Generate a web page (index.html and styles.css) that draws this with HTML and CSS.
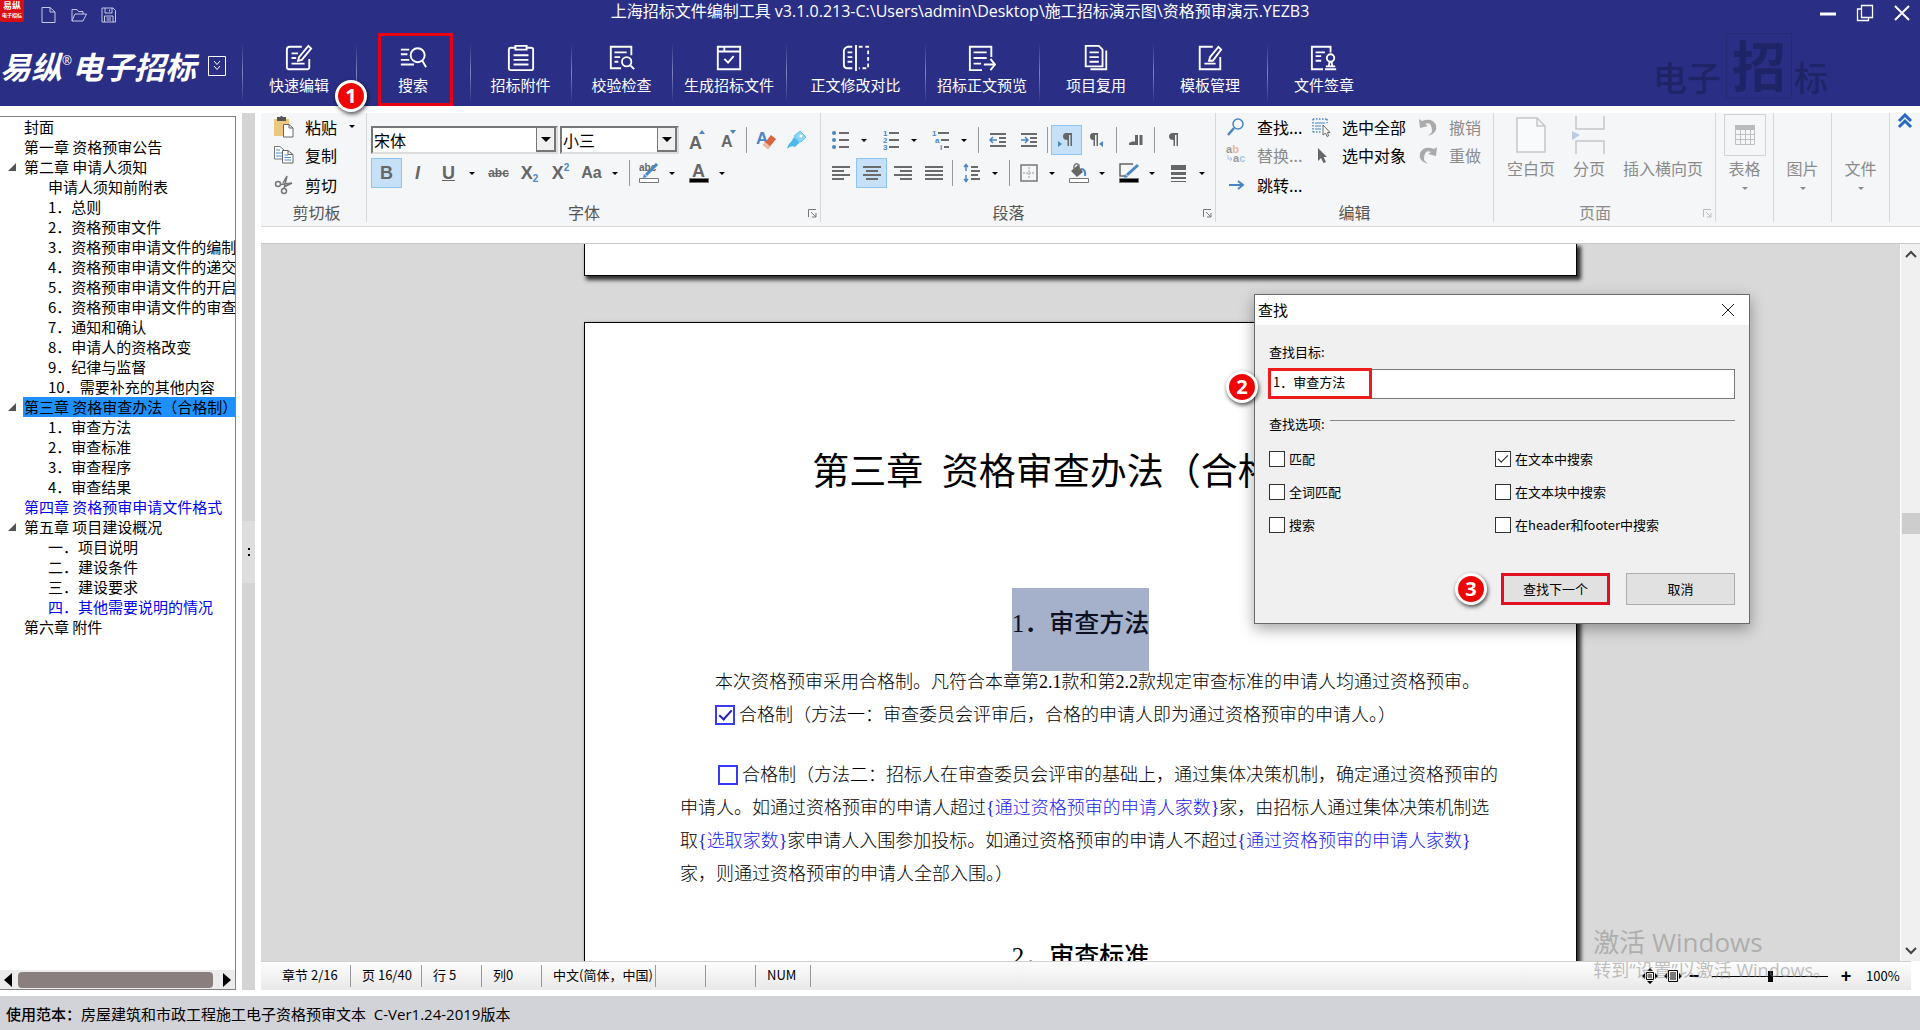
FILE: index.html
```html
<!DOCTYPE html>
<html lang="zh-CN">
<head>
  <meta charset="UTF-8" />
  <meta name="viewport" content="width=device-width, initial-scale=1.0"/>
  <title>上海招标文件编制工具</title>
  <link rel="stylesheet" href="styles.css">
</head>
<body>
  <header class="app-header">
    <div class="title-bar">
      <div class="app-icon"><span>易纵</span><small>电子招标</small></div>
      <button class="quick" aria-label="新建"><svg width="18" height="18" viewBox="0 0 18 18"><path d="M2 1.500H10L15 6V16.500H2ZM10 1.500V6H15"/></svg></button>
      <button class="quick" aria-label="打开"><svg width="18" height="18" viewBox="0 0 18 18"><path d="M2 15V3.500H7L8.500 5.500H13V8M2 15L5 8H16.500L13 15Z"/></svg></button>
      <button class="quick" aria-label="保存"><svg width="18" height="18" viewBox="0 0 18 18"><path d="M2 2H13L15.500 4.500V16H2ZM5 2V7H12V2M9.500 3.500V5.500M4.500 16V10H13V16M6.500 12H11M6.500 14H11"/></svg></button>
      <div class="window-title">上海招标文件编制工具 v3.1.0.213-C:\Users\admin\Desktop\施工招标演示图\资格预审演示.YEZB3</div>
      <div class="window-controls">
        <button aria-label="最小化"><svg width="20" height="20" viewBox="0 0 20 20"><path d="M2 11H18" stroke-width="3"/></svg></button>
        <button aria-label="还原"><svg width="20" height="20" viewBox="0 0 20 20"><path d="M6.500 2.500H17.500V14.500H6.500ZM6.500 6H2.500V17.500H13.500V14.500" stroke-width="1.300"/></svg></button>
        <button aria-label="关闭"><svg width="20" height="20" viewBox="0 0 20 20"><path d="M3 3L17 17M17 3L3 17" stroke-width="2"/></svg></button>
      </div>
    </div>
    <nav class="main-tools">
      <div class="brand">
        <span class="brand-name">易纵<sup>®</sup>电子招标</span>
        <button class="brand-menu" aria-label="菜单"><svg width="18" height="20" viewBox="0 0 18 20"><path d="M.500 .500H17.500V19.500H.500ZM6 5L9 8.500L12 5M6 10L9 13.500L12 10"/></svg></button>
      </div>
      <button class="tool"><svg width="30" height="30" viewBox="0 0 30 30"><path d="M18 3H5Q2 3 2 6V25Q2 27 4 27H24Q26 27 26 25V16M25 2L28 5L18 17L14 18L15 14ZM7 10H14M7 15H12M7 21H21"/></svg>快速编辑</button>
      <button class="tool tool-marked"><svg width="30" height="30" viewBox="0 0 30 30"><circle cx="20" cy="12" r="7.500"/><path d="M25 18L29 25M2 6H11M2 11H9M2 17H11M2 22H16"/></svg>搜索<span class="badge badge-one">1</span></button>
      <button class="tool narrow"><svg width="30" height="30" viewBox="0 0 30 30"><path d="M9 4H4Q2 4 2 6V26Q2 28 4 28H26Q28 28 28 26V6Q28 4 26 4H21M9 2H21V6H9ZM7 12H23M7 17H23M7 22H23"/></svg>招标附件</button>
      <button class="tool narrow"><svg width="30" height="30" viewBox="0 0 30 30"><path d="M14 26H3V3H25V12M7 9H20M7 14H13M7 19H11"/><circle cx="20" cy="19" r="5"/><path d="M24 23L28 27"/></svg>校验检查</button>
      <button class="tool"><svg width="30" height="30" viewBox="0 0 30 30"><path d="M3 3H27V27H3ZM3 8H27M10 3V8M10 16L14 20L20 13"/></svg>生成招标文件</button>
      <button class="tool wide"><svg width="30" height="30" viewBox="0 0 30 30"><path d="M11 3H6Q2 4 2 8V22Q2 26 6 26H11M15 1V29M6 9H11M6 14H11M6 19H11"/><path d="M18 3H28V26H18" stroke-dasharray="4 3"/></svg>正文修改对比</button>
      <button class="tool"><svg width="30" height="30" viewBox="0 0 30 30"><path d="M15 28H2V3H25V14M6 9H20M6 15H20M6 21H14M17 22H29M24 16L29 22L24 28"/></svg>招标正文预览</button>
      <button class="tool"><svg width="30" height="30" viewBox="0 0 30 30"><path d="M4 2H18L22 6V24H4ZM8 9H18M8 14H18M8 19H18M26 7V27H9"/></svg>项目复用</button>
      <button class="tool"><svg width="30" height="30" viewBox="0 0 30 30"><path d="M18 3H4V27H26V14M24 3L27 6L18 18L14 18L15 14ZM9 21H21"/></svg>模板管理</button>
      <button class="tool last"><svg width="30" height="30" viewBox="0 0 30 30"><path d="M14 27H2V3H22V9M6 9H16M6 13H12M6 18H12M16 27H28M17 24H27M20 24L21 19M24 24L23 19"/><circle cx="22" cy="15" r="4"/></svg>文件签章</button>
      <div class="header-mark">电子<b>招</b>标</div>
    </nav>
  </header>

  <main class="main">
    <aside class="sidebar">
      <ul class="tree">
        <li><a href="#">封面</a></li>
        <li><a href="#">第一章 资格预审公告</a></li>
        <li class="open"><a href="#">第二章 申请人须知</a></li>
        <li class="sub"><a href="#">申请人须知前附表</a></li>
        <li class="sub"><a href="#">1．总则</a></li>
        <li class="sub"><a href="#">2．资格预审文件</a></li>
        <li class="sub"><a href="#">3．资格预审申请文件的编制</a></li>
        <li class="sub"><a href="#">4．资格预审申请文件的递交</a></li>
        <li class="sub"><a href="#">5．资格预审申请文件的开启</a></li>
        <li class="sub"><a href="#">6．资格预审申请文件的审查</a></li>
        <li class="sub"><a href="#">7．通知和确认</a></li>
        <li class="sub"><a href="#">8．申请人的资格改变</a></li>
        <li class="sub"><a href="#">9．纪律与监督</a></li>
        <li class="sub"><a href="#">10．需要补充的其他内容</a></li>
        <li class="open selected"><a href="#">第三章 资格审查办法（合格制）</a></li>
        <li class="sub"><a href="#">1．审查方法</a></li>
        <li class="sub"><a href="#">2．审查标准</a></li>
        <li class="sub"><a href="#">3．审查程序</a></li>
        <li class="sub"><a href="#">4．审查结果</a></li>
        <li class="blue"><a href="#">第四章 资格预审申请文件格式</a></li>
        <li class="open"><a href="#">第五章 项目建设概况</a></li>
        <li class="sub"><a href="#">一．项目说明</a></li>
        <li class="sub"><a href="#">二．建设条件</a></li>
        <li class="sub"><a href="#">三．建设要求</a></li>
        <li class="sub blue"><a href="#">四．其他需要说明的情况</a></li>
        <li><a href="#">第六章 附件</a></li>
      </ul>
      <div class="h-scroll">
        <button aria-label="向左"><svg width="8" height="14" viewBox="0 0 8 14"><path d="M8 0V14L0 7Z"/></svg></button>
        <div class="h-thumb"></div>
        <button aria-label="向右"><svg width="8" height="14" viewBox="0 0 8 14"><path d="M0 0V14L8 7Z"/></svg></button>
      </div>
    </aside>
    <div class="splitter"><div class="splitter-handle"><i></i><i></i></div></div>

    <section class="workspace">
      <div class="ribbon">
        <div class="group clipboard">
          <div class="stack">
            <button class="item"><svg width="20" height="22" viewBox="0 0 20 22"><path fill="#ecc77e" d="M0 3H15V20H0Z"/><path fill="#555" d="M3 1H6Q7.500-1 9 1H12V5H3Z"/><path fill="#fff" stroke="#666" d="M9.500 8.500H15L19 12V21H9.500ZM15 8.500V12H19"/></svg>粘贴<i class="caret paste-caret"></i></button>
            <button class="item"><svg width="20" height="22" viewBox="0 0 20 22"><path fill="#fff" stroke="#777" d="M.500 2.500H6L10 6V15H.500Z"/><path stroke="#4a86c5" d="M2 6H6M2 9H8M2 12H8"/><path fill="#fff" stroke="#666" d="M8.500 6.500H14L19 10.500V19H8.500ZM14 6.500V10.500H19"/><path stroke="#4a86c5" d="M10.500 11H14M10.500 13.500H17M10.500 16H17"/></svg>复制</button>
            <button class="item"><svg width="20" height="22" viewBox="0 0 20 22" fill="none" stroke="#777" stroke-width="1.500"><circle cx="4" cy="10" r="2.500"/><circle cx="10" cy="17" r="2.500"/><path d="M6.500 10.500L18 9L10 13M10 14.500L13 2L9 9"/></svg>剪切</button>
          </div>
          <div class="group-title">剪切板</div>
        </div>

        <div class="group font">
          <div class="rows">
            <div class="row">
              <label class="combo combo-font"><select aria-label="字体"><option>宋体</option></select><span class="drop"><i class="caret big"></i></span></label>
              <label class="combo combo-size"><select aria-label="字号"><option>小三</option></select><span class="drop"><i class="caret big"></i></span></label>
              <button class="ib" aria-label="增大字号"><svg width="22" height="22" viewBox="0 0 22 22"><text x="3" y="20" class="gA">A</text><path fill="#4a86c5" d="M13 5L16 1L19 5Z"/></svg></button>
              <button class="ib" aria-label="减小字号"><svg width="22" height="22" viewBox="0 0 22 22"><text x="4" y="18" class="gS">A</text><path fill="#4a86c5" d="M13 1L16 5L19 1Z"/></svg></button>
              <span class="sep"></span>
              <button class="ib" aria-label="清除格式"><svg width="22" height="22" viewBox="0 0 22 22"><text x="1" y="15" class="gB">A</text><path fill="#d9643f" d="M16 6L21 10L13 20L8 16Z"/><path fill="#f3b8a4" d="M8 16L10 13L15 17L13 20Z"/></svg></button>
              <button class="ib" aria-label="格式刷"><svg width="22" height="22" viewBox="0 0 22 22"><path fill="#8fd6f7" stroke="#5cc3ef" d="M14 2L20 8L15 13L8 7Z"/><path fill="#4bb9ee" d="M8 8L14 13L9 18Q5 16 1 20Q2 15 5 13Z"/><circle cx="15" cy="7" r="1.500" fill="#fff"/></svg></button>
            </div>
            <div class="row">
              <button class="ib on txt">B</button>
              <button class="ib txt"><em>I</em></button>
              <button class="ib txt"><u>U</u></button><button class="cb" aria-label="下划线样式"><i class="caret"></i></button>
              <button class="ib txt tiny"><s>abc</s></button>
              <button class="ib txt">X<sub>2</sub></button>
              <button class="ib txt">X<sup>2</sup></button>
              <button class="ib txt small">Aa</button><button class="cb" aria-label="大小写"><i class="caret"></i></button>
              <span class="sep"></span>
              <button class="ib" aria-label="突出显示"><svg width="22" height="22" viewBox="0 0 22 22"><text x="1" y="9" class="gT">abc</text><path stroke="#4a86c5" stroke-width="3" d="M19 2L8 13"/><path fill="#4a86c5" d="M5 16L6 12L9 15Z"/><path fill="#fff" stroke="#777" d="M1.500 16.500H20.500V20.500H1.500Z"/></svg></button><button class="cb" aria-label="突出显示颜色"><i class="caret"></i></button>
              <button class="ib" aria-label="字体颜色"><svg width="22" height="22" viewBox="0 0 22 22"><text x="4" y="15" class="gA">A</text><path fill="#000" stroke="#777" d="M1.500 16.500H20.500V20.500H1.500Z"/></svg></button><button class="cb" aria-label="字体颜色选择"><i class="caret"></i></button>
            </div>
          </div>
          <div class="group-title">字体</div>
          <svg class="launch" width="9" height="9" viewBox="0 0 9 9"><path d="M.500 8V.500H8M3 3L8 8M8 4V8H4"/></svg>
        </div>

        <div class="group para">
          <div class="rows">
            <div class="row">
              <button class="ib" aria-label="项目符号"><svg width="20" height="20" viewBox="0 0 20 20"><g fill="#4a86c5"><circle cx="3" cy="3" r="2"/><circle cx="3" cy="10" r="2"/><circle cx="3" cy="17" r="2"/></g><path class="ln" d="M8 3H18M8 10H18M8 17H18"/></svg></button><button class="cb" aria-label="项目符号库"><i class="caret"></i></button>
              <button class="ib" aria-label="编号"><svg width="20" height="20" viewBox="0 0 20 20"><text x="2" y="6" class="gN">1</text><text x="2" y="13" class="gN">2</text><text x="2" y="20" class="gN">3</text><path class="ln" d="M8 3H18M8 10H18M8 17H18"/></svg></button><button class="cb" aria-label="编号库"><i class="caret"></i></button>
              <button class="ib" aria-label="多级列表"><svg width="20" height="20" viewBox="0 0 20 20"><text x="1" y="6" class="gN">1</text><text x="4" y="13" class="gN">a</text><text x="9" y="20" class="gN">i</text><path class="ln" d="M7 3H18M10 10H18M13 17H18"/></svg></button><button class="cb" aria-label="列表库"><i class="caret"></i></button>
              <span class="sep"></span>
              <button class="ib" aria-label="减少缩进"><svg width="20" height="20" viewBox="0 0 20 20"><path class="ln" d="M2 4H18M11 8H18M11 12H18M2 16H18"/><path stroke="#4a86c5" fill="none" stroke-width="1.500" d="M9 10H3M5 7L2 10L5 13"/></svg></button>
              <button class="ib" aria-label="增加缩进"><svg width="20" height="20" viewBox="0 0 20 20"><path class="ln" d="M2 4H18M11 8H18M11 12H18M2 16H18"/><path stroke="#4a86c5" fill="none" stroke-width="1.500" d="M2 10H8M6 7L9 10L6 13"/></svg></button>
              <span class="sep"></span>
              <button class="ib on" aria-label="从左到右"><svg width="20" height="20" viewBox="0 0 20 20"><path class="fl" d="M9 3H15V16H13.500V5H12V16H10.500V10Q6 10 6 6.500Q6 3 9 3"/><path fill="#4a86c5" d="M1 11V17L5 14Z"/></svg></button>
              <button class="ib" aria-label="从右到左"><svg width="20" height="20" viewBox="0 0 20 20"><path class="fl" d="M5 3H10V16H8.500V5H7V16H5.500V10Q2 10 2 6.500Q2 3 5 3"/><path fill="#4a86c5" d="M15 11V17L11 14Z"/></svg></button>
              <span class="sep"></span>
              <button class="ib" aria-label="断行"><svg width="20" height="20" viewBox="0 0 20 20"><path class="fl" d="M9 5H12V15H3V13L6 11.500H9ZM13.500 5H16.500V15H13.500Z"/></svg></button>
              <span class="sep"></span>
              <button class="ib" aria-label="显示标记"><svg width="20" height="20" viewBox="0 0 20 20"><path class="fl" d="M9 3H14V16H12.500V5H11V16H9.500V10Q5 10 5 6.500Q5 3 9 3"/></svg></button>
            </div>
            <div class="row">
              <button class="ib" aria-label="左对齐"><svg width="20" height="20" viewBox="0 0 20 20"><path class="ln" d="M1 4H19M1 8H13M1 12H19M1 16H13"/></svg></button>
              <button class="ib on" aria-label="居中"><svg width="20" height="20" viewBox="0 0 20 20"><path class="ln" d="M1 4H19M4 8H16M1 12H19M4 16H16"/></svg></button>
              <button class="ib" aria-label="右对齐"><svg width="20" height="20" viewBox="0 0 20 20"><path class="ln" d="M1 4H19M7 8H19M1 12H19M7 16H19"/></svg></button>
              <button class="ib" aria-label="两端对齐"><svg width="20" height="20" viewBox="0 0 20 20"><path class="ln" d="M1 4H19M1 8H19M1 12H19M1 16H19"/></svg></button>
              <span class="sep"></span>
              <button class="ib" aria-label="行距"><svg width="20" height="20" viewBox="0 0 20 20"><path fill="none" stroke="#4a86c5" stroke-width="1.500" d="M4 2V8M2 4L4 1.500L6 4M4 12V18M2 16L4 18.500L6 16"/><path class="ln" d="M9 4H16M9 8H18M9 12H16M9 16H18"/></svg></button><button class="cb" aria-label="行距选项"><i class="caret"></i></button>
              <span class="sep"></span>
              <button class="ib" aria-label="边框"><svg width="20" height="20" viewBox="0 0 20 20"><path fill="none" stroke="#777" stroke-width="1.500" d="M2 2H18V18H2Z"/><path stroke="#999" stroke-dasharray="2 1" d="M10 4V16M4 10H16"/></svg></button><button class="cb" aria-label="边框选项"><i class="caret"></i></button>
              <button class="ib" aria-label="底纹"><svg width="22" height="22" viewBox="0 0 22 22"><path class="fl" d="M3 9L10 3L15 10L9 15Z"/><path fill="none" stroke="#777" stroke-width="1.500" d="M6 8V4Q8 0 11 3V8"/><path fill="none" stroke="#4a86c5" stroke-width="2" d="M13 7Q18 7 17 14"/><path fill="#fff" stroke="#777" d="M1.500 16.500H20.500V20.500H1.500Z"/></svg></button><button class="cb" aria-label="底纹颜色"><i class="caret"></i></button>
              <button class="ib" aria-label="边框颜色"><svg width="22" height="22" viewBox="0 0 22 22"><path fill="none" stroke="#666" stroke-width="1.500" d="M15 2H2V14H7"/><path stroke="#4a86c5" stroke-width="3" d="M20 3L9 13"/><path fill="#4a86c5" d="M6 16L7 12L10 15Z"/><path fill="#000" stroke="#777" d="M1.500 16.500H20.500V20.500H1.500Z"/></svg></button><button class="cb" aria-label="边框颜色选择"><i class="caret"></i></button>
              <button class="ib" aria-label="线型"><svg width="20" height="20" viewBox="0 0 20 20"><path class="fl" d="M2 2H17V7H2ZM2 9H17V12H2ZM2 14H17V16H2ZM2 18H17V19H2Z"/></svg></button><button class="cb" aria-label="线型选择"><i class="caret"></i></button>
            </div>
          </div>
          <div class="group-title">段落</div>
          <svg class="launch" width="9" height="9" viewBox="0 0 9 9"><path d="M.500 8V.500H8M3 3L8 8M8 4V8H4"/></svg>
        </div>

        <div class="group edit">
          <div class="edit-grid">
            <button class="item"><svg width="20" height="20" viewBox="0 0 20 20" fill="none" stroke="#4a86c5"><circle cx="12" cy="7" r="5" stroke-width="1.500"/><path stroke-width="2.500" d="M8 11L2 18"/></svg>查找...</button>
            <button class="item"><svg width="20" height="20" viewBox="0 0 20 20"><path fill="none" stroke="#4a86c5" stroke-width="1.500" stroke-dasharray="1.500 1.500" d="M2 2H16M2 2V15M16 2V6M2 15H10"/><path stroke="#4a86c5" d="M4 6H14M4 9H10M4 12H10"/><path fill="#fff" stroke="#666" d="M12 8V18L14.500 16L16 19.500L17.500 19L16.500 15.500H19Z"/></svg>选中全部</button>
            <button class="item off"><svg width="20" height="20" viewBox="0 0 20 20"><path fill="#aaa" d="M1 2L2 11L10 9L7 7Q14 4 14 15L10 19Q20 16 18 8Q14 0 4 4Z"/></svg>撤销</button>
            <button class="item off"><svg width="20" height="20" viewBox="0 0 20 20"><text x="0" y="8" class="gR"><tspan fill="#999">a</tspan><tspan fill="#eeb0a0">b</tspan></text><path fill="none" stroke="#a9c4e3" d="M2 10V14H6M4 12L6 14L4 16"/><text x="7" y="17" class="gR"><tspan fill="#999">a</tspan><tspan fill="#a9c4e3">c</tspan></text></svg>替换...</button>
            <button class="item"><svg width="20" height="20" viewBox="0 0 20 20"><path class="fl" d="M7 3V16L10 13L12.500 18L15 17L12.500 12H16Z"/></svg>选中对象</button>
            <button class="item off"><svg width="20" height="20" viewBox="0 0 20 20"><path fill="#aaa" d="M19 2L18 11L10 9L13 7Q6 4 6 15L10 19Q0 16 2 8Q6 0 16 4Z"/></svg>重做</button>
            <button class="item"><svg width="20" height="20" viewBox="0 0 20 20"><path fill="none" stroke="#4a86c5" stroke-width="2" d="M3 10H16M12 6L17 10L12 14"/></svg>跳转...</button>
          </div>
          <div class="group-title">编辑</div>
        </div>

        <div class="group page-group off">
          <div class="big-row">
            <button class="big blank"><svg width="40" height="42" viewBox="0 0 40 42"><path fill="#f9fafb" stroke="#c4c7ca" stroke-width="1.500" d="M6 4H26L34 12V38H6ZM26 4V12H34"/></svg>空白页</button>
            <button class="big break"><svg width="40" height="42" viewBox="0 0 40 42"><path fill="none" stroke="#c4c7ca" stroke-width="1.500" d="M7 2V15H35V2M7 40V27H35V40"/><path fill="#b8cce4" d="M3 17V26L11 21Z"/></svg>分页</button>
            <button class="big land"><span class="no-icon"></span>插入横向页</button>
          </div>
          <div class="group-title">页面</div>
          <svg class="launch" width="9" height="9" viewBox="0 0 9 9"><path d="M.500 8V.500H8M3 3L8 8M8 4V8H4"/></svg>
        </div>

        <div class="group menu-group off"><button class="big"><svg width="42" height="42" viewBox="0 0 42 42"><path fill="none" stroke="#d0d2d5" d="M.500 .500H41.500V41.500H.500Z"/><path fill="#bbb" d="M11 11H31V16H11Z"/><path fill="none" stroke="#c0c0c0" d="M11.500 16V30.500H30.500V16M11 20.500H31M11 25.500H31M16.500 16V30M21.500 16V30M26.500 16V30"/></svg>表格<i class="caret"></i></button></div>
        <div class="group menu-group off"><button class="big"><span class="no-icon"></span>图片<i class="caret"></i></button></div>
        <div class="group menu-group off"><button class="big"><span class="no-icon"></span>文件<i class="caret"></i></button></div>
        <button class="collapse" aria-label="折叠功能区"><svg width="16" height="16" viewBox="0 0 16 16"><path d="M2 8L8 2L14 8M2 14L8 8L14 14"/></svg></button>
      </div>

      <div class="doc-area">
        <div class="canvas">
          <div class="sheet sheet-end"></div>
          <article class="sheet sheet-main">
            <h1>第三章&ensp;资格审查办法（合格制）</h1>
            <h2><mark>1．审查方法</mark></h2>
            <p class="indent">本次资格预审采用合格制。凡符合本章第2.1款和第2.2款规定审查标准的申请人均通过资格预审。</p>
            <p class="indent"><label><input type="checkbox" checked>合格制（方法一：审查委员会评审后，合格的申请人即为通过资格预审的申请人。）</label></p>
            <p class="second"><label class="first-line"><input type="checkbox">合格制（方法二：招标人在审查委员会评审的基础上，通过集体决策机制，确定通过资格预审的</label><br>
              申请人。如通过资格预审的申请人超过<span class="field">{通过资格预审的申请人家数}</span>家，由招标人通过集体决策机制选<br>
              取<span class="field">{选取家数}</span>家申请人入围参加投标。如通过资格预审的申请人不超过<span class="field">{通过资格预审的申请人家数}</span><br>
              家，则通过资格预审的申请人全部入围。）</p>
            <h2 class="next">2．审查标准</h2>
          </article>
        </div>
        <div class="v-scroll">
          <button aria-label="向上"><svg width="12" height="8" viewBox="0 0 12 8"><path d="M1 7L6 2L11 7"/></svg></button>
          <div class="v-thumb"></div>
          <button aria-label="向下"><svg width="12" height="8" viewBox="0 0 12 8"><path d="M1 1L6 6L11 1"/></svg></button>
        </div>
      </div>

      <footer class="status">
        <span class="cell c1">章节 2/16</span>
        <span class="cell c2">页 16/40</span>
        <span class="cell c3">行 5</span>
        <span class="cell c3">列0</span>
        <span class="cell c4">中文(简体，中国)</span>
        <span class="cell c5"></span>
        <span class="cell c5"></span>
        <span class="cell c6">NUM</span>
        <div class="zoom">
          <svg width="18" height="18" viewBox="0 0 18 18"><path d="M9 1L12 4H6ZM9 17L6 14H12ZM1 9L4 6V12ZM17 9L14 6V12Z"/><path fill="none" stroke="#000" d="M5.500 5.500H12.500V12.500H5.500ZM7 8H11M7 10H11"/></svg>
          <svg width="18" height="18" viewBox="0 0 18 18"><path d="M0 9L3 6V12ZM18 9L15 6V12Z"/><path fill="none" stroke="#000" d="M4.500 3.500H13.500V14.500H4.500ZM6 6H12M6 8H12M6 10H12M6 12H12"/></svg>
          <button aria-label="缩小">−</button>
          <input type="range" min="0" max="200" value="100" aria-label="缩放">
          <button aria-label="放大">+</button>
          <span class="percent">100%</span>
        </div>
      </footer>
    </section>
  </main>

  <div class="template-bar"><b>使用范本：</b>房屋建筑和市政工程施工电子资格预审文本&nbsp; C-Ver1.24-2019版本</div>

  <form class="dialog" role="dialog" aria-label="查找">
    <div class="dialog-title"><span>查找</span><button type="button" aria-label="关闭"><svg width="14" height="14" viewBox="0 0 14 14"><path d="M1 1L13 13M13 1L1 13"/></svg></button></div>
    <div class="dialog-body">
      <label for="target">查找目标:</label>
      <div class="target-box">
        <input id="target" type="text" value="1．审查方法">
        <span class="target-mark"></span>
        <span class="badge badge-two">2</span>
      </div>
      <div class="options-head"><span>查找选项:</span><hr></div>
      <div class="options">
        <label><input type="checkbox">匹配</label>
        <label><input type="checkbox" checked>在文本中搜索</label>
        <label><input type="checkbox">全词匹配</label>
        <label><input type="checkbox">在文本块中搜索</label>
        <label><input type="checkbox">搜索</label>
        <label><input type="checkbox">在header和footer中搜索</label>
      </div>
      <div class="actions">
        <button type="button" class="next-btn">查找下一个<span class="badge badge-three">3</span></button>
        <button type="button">取消</button>
      </div>
    </div>
  </form>

  <div class="activate"><strong>激活 Windows</strong><span>转到“设置”以激活 Windows。</span></div>
</body>
</html>
```
FILE: styles.css
```css
* {
  box-sizing: border-box;
}
body {
  margin: 0;
  height: 100vh;
  display: flex;
  flex-direction: column;
  position: relative;
  overflow: hidden;
  background: #fff;
  color: #000;
  font-family: "Noto Sans CJK SC", "Noto Sans", sans-serif;
  font-size: 16px;
  white-space: nowrap;
}
button {
  padding: 0;
  border: 0;
  background: none;
  color: inherit;
  font: inherit;
  white-space: nowrap;
}
svg {
  display: block;
  flex: none;
}

/* header */
.app-header {
  flex: none;
  height: 106px;
  background: #2a2f85;
  color: #fff;
}
.app-header svg {
  fill: none;
  stroke: #fff;
  stroke-width: 2;
}
.title-bar {
  position: relative;
  display: flex;
  height: 33px;
}
.app-icon {
  width: 24px;
  height: 22px;
  margin-right: 10px;
  padding-top: 1px;
  background: #dc0d12;
  border-radius: 0 0 2px 2px;
  text-align: center;
  font-weight: 700;
}
.app-icon span {
  display: block;
  font-size: 9px;
  line-height: 10px;
}
.app-icon small {
  display: block;
  font-size: 5px;
  line-height: 8px;
}
.quick {
  width: 30px;
  height: 30px;
}
.quick svg {
  margin: 0 auto;
  stroke: #c6c9e4;
  stroke-width: 1;
}
.window-title {
  position: absolute;
  left: 0;
  right: 0;
  top: 0;
  font-family: "Open Sans", "Noto Sans CJK SC", sans-serif;
  line-height: 22px;
  text-align: center;
  pointer-events: none;
}
.window-controls {
  display: flex;
  gap: 17px;
  height: 26px;
  margin-left: auto;
  margin-right: 8px;
}
.main-tools {
  display: flex;
  height: 73px;
}
.brand {
  display: flex;
  align-items: center;
  gap: 6px;
  width: 242px;
  flex: none;
  padding-bottom: 8px;
}
.brand-name {
  width: 202px;
  font-size: 31px;
  font-weight: 700;
  font-style: italic;
}
.brand-name sup {
  font: 400 12px/1px "Open Sans", sans-serif;
  vertical-align: 14px;
}
.brand-menu svg {
  stroke-width: 1;
}
.tool {
  position: relative;
  display: flex;
  flex-direction: column;
  align-items: center;
  gap: 2px;
  width: 114px;
  padding-top: 10px;
  font-size: 15px;
  line-height: 20px;
  background: linear-gradient(transparent, #8084bb, transparent) left 10px / 1px 60px no-repeat;
}
.tool.narrow {
  width: 101px;
}
.tool.wide {
  width: 139px;
}
.tool svg {
  width: 28px;
  height: 30px;
}
.tool-marked::after {
  content: "";
  position: absolute;
  inset: 0 17px 0 22px;
  border: 3px solid #e60012;
}
.header-mark {
  margin: 0 92px 0 auto;
  display: flex;
  align-items: flex-end;
  gap: 2px;
  color: #1f2466;
  font-size: 34px;
  font-weight: 500;
  line-height: 58px;
}
.header-mark b {
  width: 66px;
  height: 66px;
  margin: 0 0 7px 3px;
  border: 1px solid #252a76;
  font-size: 54px;
  line-height: 60px;
  text-align: center;
}
.badge {
  position: absolute;
  z-index: 5;
  width: 32px;
  height: 32px;
  border: 3px solid #fff;
  border-radius: 50%;
  background: #f00505;
  box-shadow: 1px 2px 4px rgba(0, 0, 0, 0.7);
  color: #fff;
  font: 700 20px/26px "Noto Sans", sans-serif;
  text-align: center;
}
.badge-one {
  left: -21px;
  top: 47px;
}
.badge-two {
  left: -43px;
  top: 2px;
}
.badge-three {
  left: -49px;
  top: -3px;
}

/* chapter tree */
.main {
  flex: 1;
  display: flex;
  min-height: 0;
  padding: 7px 0 6px;
}
.sidebar {
  display: flex;
  flex-direction: column;
  justify-content: space-between;
  flex: none;
  width: 236px;
  margin: 3px 6px 0 0;
  border: 1px solid #828282;
  border-width: 1px 1px 1px 0;
  overflow: hidden;
}
.tree {
  margin: 0;
  padding: 0 0 0 23px;
  list-style: none;
  font-size: 15px;
  line-height: 20px;
}
.tree li {
  position: relative;
  height: 20px;
  padding-left: 1px;
}
.tree .sub {
  padding-left: 25px;
}
.tree a {
  color: inherit;
  text-decoration: none;
}
.tree .blue {
  color: #0000ee;
}
.tree .selected {
  background: #1e90ff;
}
.tree .open::before {
  content: "";
  position: absolute;
  left: -15px;
  top: 6px;
  border-left: 8px solid transparent;
  border-bottom: 8px solid #555;
}
.h-scroll {
  display: flex;
  align-items: center;
  gap: 6px;
  flex: none;
  height: 19px;
  padding: 0 4px;
  background: #ececec;
}
.h-scroll button {
  width: 8px;
}
.h-thumb {
  flex: 1;
  height: 16px;
  margin-right: 4px;
  border-radius: 4px;
  background: #8a7f7f;
}
.splitter {
  flex: none;
  width: 13px;
  margin-right: 6px;
  background: #d4d4d4;
}
.splitter-handle {
  display: flex;
  flex-direction: column;
  align-items: center;
  justify-content: center;
  gap: 4px;
  height: 62px;
  margin-top: 408px;
  background: #dedede;
}
.splitter-handle i {
  width: 2px;
  height: 2px;
  background: #000;
}

/* ribbon */
.workspace {
  flex: 1;
  display: flex;
  flex-direction: column;
  min-width: 0;
}
.ribbon {
  display: flex;
  flex: none;
  height: 114px;
  margin-bottom: 16px;
  background: #f5f6f8;
  border-bottom: 1px solid #d6d8dc;
}
.group {
  position: relative;
  display: flex;
  flex-direction: column;
  justify-content: space-between;
  flex: none;
  height: 109px;
  border-right: 1px solid #d6d8dc;
}
.group-title {
  line-height: 20px;
  text-align: center;
  color: #555;
}
.off,
.off .group-title {
  color: #8b8b8b;
}
.clipboard {
  width: 106px;
}
.clipboard .group-title {
  padding-left: 6px;
}
.font {
  width: 454px;
}
.font .group-title,
.para .group-title,
.page-group .group-title {
  padding-right: 19px;
}
.para {
  width: 395px;
}
.edit {
  width: 278px;
}
.page-group {
  width: 222px;
}
.menu-group {
  width: 58px;
}
.stack {
  padding-left: 13px;
}
.item {
  display: flex;
  align-items: center;
  gap: 11px;
  height: 30px;
}
.stack .item:first-child,
.edit-grid .item:nth-child(-n+3) {
  height: 27px;
}
.paste-caret {
  margin-left: 1px;
}
.rows {
  display: flex;
  flex-direction: column;
  gap: 3px;
  padding: 12px 0 0 4px;
}
.row {
  display: flex;
  align-items: center;
  height: 30px;
}
.combo {
  position: relative;
  height: 28px;
  margin-right: 2px;
  border: 2px solid #777;
  border-color: #777 #ddd #ddd #777;
  background: #fff;
}
.combo-font {
  width: 187px;
}
.combo-size {
  width: 119px;
}
.combo select {
  display: block;
  width: 100%;
  height: 24px;
  padding: 0 22px 0 1px;
  border: 0;
  appearance: none;
  background: #fff;
  color: #000;
  font: inherit;
  line-height: 24px;
}
.drop {
  position: absolute;
  right: 0;
  top: 0;
  display: flex;
  align-items: center;
  justify-content: center;
  width: 20px;
  height: 24px;
  background: #f0f0f0;
  border: 1px solid #777;
  border-width: 0 2px 2px 1px;
  pointer-events: none;
}
.caret {
  width: 0;
  border: 3px solid transparent;
  border-top-color: currentColor;
  border-bottom: 0;
}
.caret.big {
  border-width: 5px 5px 0;
}
.ib {
  display: flex;
  align-items: center;
  justify-content: center;
  width: 31px;
  height: 30px;
}
.ib.on {
  background: #c5e0f7;
  border: 1px solid #8ec4f0;
}
.ib.txt {
  color: #666;
  font: 700 18px/20px "Liberation Sans", sans-serif;
}
.ib.tiny {
  font-size: 12px;
}
.ib.small {
  font-size: 16px;
}
.ib sub,
.ib sup {
  color: #4a86c5;
  font-size: 10px;
  line-height: 1px;
}
.ib sup {
  align-self: flex-start;
  margin-top: 9px;
}
.ib sub {
  align-self: flex-end;
  margin-bottom: 9px;
}
.cb {
  width: 19px;
  height: 30px;
  padding-left: 5px;
}
.cb .caret {
  display: block;
}
.sep {
  width: 7px;
  height: 26px;
  background: linear-gradient(#999, #999) 3px 0 / 1px 26px no-repeat;
}
.ln {
  fill: none;
  stroke: #6a6a6a;
  stroke-width: 2;
}
.fl {
  fill: #666;
}
.gA,
.gS,
.gB,
.gT,
.gN,
.gR {
  font-family: "Liberation Sans", sans-serif;
  font-weight: 700;
  font-size: 18px;
  fill: #666;
}
.gS {
  font-size: 16px;
}
.gB {
  font-size: 17px;
  fill: #4a86c5;
}
.gT {
  font-size: 10px;
}
.gN {
  font-size: 8px;
  fill: #4a86c5;
}
.gR {
  font-size: 11px;
}
.launch {
  position: absolute;
  right: 3px;
  bottom: 4px;
  fill: none;
  stroke: #777;
}
.off .launch {
  stroke: #bbb;
}
.edit-grid {
  display: grid;
  grid-template-columns: 85px 107px auto;
  justify-content: start;
  padding-left: 10px;
}
.big-row {
  display: flex;
  padding: 1px 0 0 12px;
}
.big {
  display: flex;
  flex-direction: column;
  align-items: center;
  line-height: 24px;
}
.blank {
  width: 50px;
}
.break {
  width: 66px;
}
.land {
  width: 82px;
}
.no-icon {
  height: 42px;
}
.menu-group .big {
  padding-top: 1px;
}
.menu-group .caret {
  margin-top: 7px;
}
.collapse {
  width: 30px;
  height: 16px;
}
.collapse svg {
  margin: 0 auto;
  fill: none;
  stroke: #2b67c4;
  stroke-width: 3;
}

/* document */
.doc-area {
  flex: 1;
  display: flex;
  min-height: 0;
  border-top: 1px solid #c8c8c8;
}
.canvas {
  flex: 1;
  display: flex;
  flex-direction: column;
  align-items: center;
  gap: 46px;
  min-width: 0;
  overflow: hidden;
  background: #d9d9d9;
}
.sheet {
  flex: none;
  width: 993px;
  max-width: 100%;
  background: #fff;
  border: 1px solid #000;
  box-shadow: 3px 3px 4px 1px rgba(0, 0, 0, 0.8);
  font-family: "Liberation Serif", "Noto Sans CJK SC", serif;
  font-size: 18px;
  font-weight: 300;
  line-height: 33px;
}
.sheet-end {
  height: 32px;
  border-top: 0;
}
.sheet-main {
  min-height: 1403px;
  padding: 125px 95px 0;
}
.sheet h1 {
  margin: 0;
  font-size: 37px;
  font-weight: 400;
  line-height: 50px;
  text-align: center;
}
.sheet h2 {
  height: 78px;
  margin: 90px 0 0;
  font-size: 25px;
  font-weight: 500;
  line-height: 83px;
  text-align: center;
}
.sheet mark {
  display: inline-block;
  height: 83px;
  line-height: 72px;
  background: #a5b0ca;
  color: #0c1020;
  vertical-align: top;
}
.sheet p {
  margin: 0;
}
.sheet p.indent {
  padding-left: 35px;
}
.sheet p.second {
  margin-top: 27px;
}
.first-line {
  padding-left: 38px;
}
.sheet input {
  appearance: none;
  width: 20px;
  height: 20px;
  margin: 0 4px 0 0;
  border: 2px solid #3a3af0;
  background: #fff;
  vertical-align: -4px;
}
.sheet input:checked::after {
  content: "";
  display: block;
  width: 11px;
  height: 5px;
  margin: 3px 0 0 2px;
  border: solid #2222c0;
  border-width: 0 0 2px 2px;
  rotate: -48deg;
}
.field {
  color: #1a1aee;
}
.sheet h2.next {
  margin-top: 24px;
}
.v-scroll {
  display: flex;
  flex-direction: column;
  align-items: center;
  justify-content: space-between;
  width: 20px;
  background: #f0f0f0;
  border-left: 1px solid #fff;
}
.v-scroll button {
  width: 18px;
  height: 20px;
}
.v-scroll svg {
  margin: 0 auto;
  fill: none;
  stroke: #444;
  stroke-width: 2;
}
.v-thumb {
  width: 18px;
  height: 21px;
  margin-bottom: 158px;
  background: #cdcdcd;
}

/* status bar */
.status {
  display: flex;
  align-items: center;
  flex: none;
  height: 29px;
  margin-right: 9px;
  border-top: 1px solid #d0d0d0;
  background: linear-gradient(#fdfdfd, #e8e8e8);
  font-size: 13px;
  line-height: 20px;
}
.cell {
  height: 22px;
  padding-left: 11px;
  border-right: 1px solid #999;
}
.c1 {
  width: 90px;
  padding-left: 21px;
}
.c2 {
  width: 71px;
}
.c3 {
  width: 60px;
}
.c4 {
  width: 114px;
}
.c5 {
  width: 50px;
}
.c6 {
  width: 55px;
}
.zoom {
  display: flex;
  align-items: center;
  gap: 5px;
  margin-left: auto;
  margin-right: 11px;
}
.zoom button {
  width: 14px;
  font: 700 18px/20px "Liberation Sans", sans-serif;
}
.zoom input {
  appearance: none;
  width: 116px;
  height: 11px;
  margin: 0 6px;
  background: linear-gradient(#000, #000) 0 5px / 100% 1px no-repeat;
}
.zoom input::-webkit-slider-thumb {
  appearance: none;
  width: 5px;
  height: 11px;
  background: #000;
}
.percent {
  width: 34px;
  margin-left: 8px;
}
.template-bar {
  flex: none;
  height: 34px;
  padding-left: 6px;
  background: #d2d3d8;
  font-family: "Open Sans", "Noto Sans CJK SC", sans-serif;
  font-size: 15px;
  line-height: 36px;
}
.template-bar b {
  font-weight: 500;
}

/* find dialog */
.dialog {
  position: absolute;
  left: 1254px;
  top: 294px;
  width: 496px;
  border: 1px solid #6a6a6a;
  background: #f0f0f0;
  box-shadow: 0 5px 14px rgba(0, 0, 0, 0.35);
  font-size: 13px;
  line-height: 20px;
}
.dialog-title {
  display: flex;
  align-items: center;
  justify-content: space-between;
  height: 30px;
  padding: 0 14px 0 3px;
  background: #fff;
  font-size: 15px;
}
.dialog-title svg {
  fill: none;
  stroke: #111;
}
.dialog-body {
  padding: 17px 14px 18px;
}
.target-box {
  position: relative;
  height: 30px;
  margin: 7px 0 15px;
}
.target-box input {
  display: block;
  width: 100%;
  height: 30px;
  padding: 0 3px 6px;
  border: 1px solid #7a7a7a;
  background: #fff;
  font: inherit;
}
.target-mark {
  position: absolute;
  left: -1px;
  top: -1px;
  width: 104px;
  height: 31px;
  border: 3px solid #ee1c1c;
}
.options-head {
  display: flex;
  gap: 5px;
}
.options-head hr {
  flex: 1;
  height: 1px;
  margin: 6px 0 0;
  border: 0;
  background: #888;
}
.options {
  display: grid;
  grid-template-columns: 226px auto;
  grid-auto-rows: 33px;
  margin-top: 8px;
}
.options label {
  display: flex;
  align-items: center;
  gap: 4px;
}
.options input {
  appearance: none;
  width: 16px;
  height: 16px;
  margin: 0;
  border: 1px solid #333;
  background: #fff;
}
.options input:checked::after {
  content: "";
  display: block;
  width: 9px;
  height: 4px;
  margin: 3px 0 0 2px;
  border: solid #222;
  border-width: 0 0 1px 1px;
  rotate: -45deg;
}
.actions {
  display: flex;
  justify-content: flex-end;
  gap: 16px;
  margin-top: 32px;
}
.actions button {
  position: relative;
  width: 109px;
  height: 32px;
  border: 1px solid #adadad;
  background: #e1e1e1;
}
.actions .next-btn {
  border: 3px solid #e01020;
}

.activate {
  position: absolute;
  right: 89px;
  bottom: 48px;
  display: flex;
  flex-direction: column;
  color: rgba(130, 130, 130, 0.5);
  font-family: "Open Sans", "Noto Sans CJK SC", sans-serif;
  pointer-events: none;
}
.activate strong {
  font-size: 26px;
  font-weight: 400;
  line-height: 32px;
}
.activate span {
  font-size: 18px;
  line-height: 24px;
}
```
